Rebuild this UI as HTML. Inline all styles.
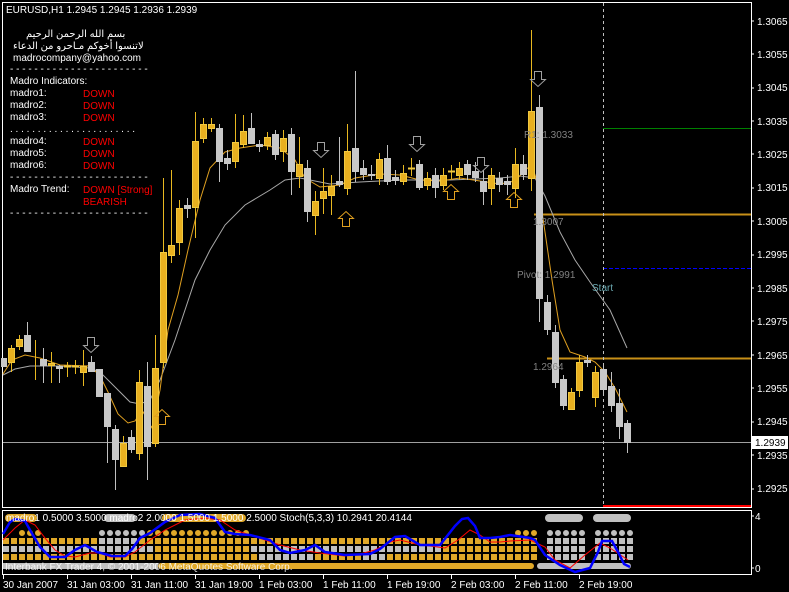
<!DOCTYPE html>
<html><head><meta charset="utf-8"><style>
html,body{margin:0;padding:0;background:#000;width:789px;height:592px;overflow:hidden}
svg{display:block}
text{font-family:"Liberation Sans","DejaVu Sans",sans-serif;font-size:10px}
</style></head><body>
<svg width="789" height="592" viewBox="0 0 789 592" xmlns="http://www.w3.org/2000/svg">
<rect width="789" height="592" fill="#000"/>
<rect x="2.5" y="2.5" width="749" height="505" fill="none" stroke="#fff"/>
<g fill="#fff">
<text x="757" y="25">1.3065</text><text x="757" y="58">1.3055</text><text x="757" y="91">1.3045</text><text x="757" y="125">1.3035</text><text x="757" y="158">1.3025</text><text x="757" y="191">1.3015</text><text x="757" y="225">1.3005</text><text x="757" y="258">1.2995</text><text x="757" y="292">1.2985</text><text x="757" y="325">1.2975</text><text x="757" y="359">1.2965</text><text x="757" y="392">1.2955</text><text x="757" y="425">1.2945</text><text x="757" y="459">1.2935</text><text x="757" y="492">1.2925</text>
</g>
<g stroke="#fff"><path d="M751 21h3M751 54h3M751 88h3M751 121h3M751 154h3M751 188h3M751 221h3M751 255h3M751 288h3M751 321h3M751 355h3M751 388h3M751 422h3M751 455h3M751 489h3"/></g>
<line x1="3" y1="442.5" x2="751" y2="442.5" stroke="#a0a0a0"/>
<line x1="603" y1="128.5" x2="751" y2="128.5" stroke="#008000"/>
<line x1="534" y1="214.5" x2="751" y2="214.5" stroke="#c89018" stroke-width="2"/>
<line x1="547" y1="358.5" x2="751" y2="358.5" stroke="#c89018" stroke-width="2"/>
<line x1="603" y1="268.5" x2="751" y2="268.5" stroke="#0000ff" stroke-dasharray="4,2"/>
<line x1="603.5" y1="3" x2="603.5" y2="507" stroke="#c0c0c0" stroke-dasharray="3,3"/>
<line x1="603" y1="506" x2="751" y2="506" stroke="#ff0000" stroke-width="2"/>
<rect x="752" y="436" width="36" height="13" fill="#fff"/><text x="755" y="446" fill="#000">1.2939</text>
<polyline fill="none" stroke="#a8a8a8" points="3,375 15,369 30,366 60,366 90,368 100,372 115,387 130,402 140,404 150,400 160,380 175,340 195,280 210,250 225,225 245,205 270,190 285,180 300,178 330,184 360,182 400,180 450,180 500,178 520,176 535,178 545,196 560,232 575,260 590,282 610,310 627,348"/>
<polyline fill="none" stroke="#e0a020" points="3,374 12,360 25,355 40,358 60,365 90,366 100,376 108,392 118,414 128,423 135,421 142,410 152,428 160,390 168,330 178,295 188,250 200,200 210,168 225,152 240,148 260,145 280,148 295,160 305,178 320,187 340,185 355,178 380,174 400,175 420,180 440,181 460,178 480,181 500,184 515,181 525,170 532,165 538,185 545,232 552,280 560,330 570,352 585,357 595,362 605,372 615,388 627,412"/>
<path stroke="#c0c0c0" fill="none" d="M27.5 322v30M43.5 348v35M59.5 365v18M91.5 356v16M99.5 369v28M107.5 393v70M115.5 425v65M131.5 430v23M147.5 362v118M187.5 198v20M219.5 124v58M227.5 150v20M251.5 113v31M259.5 140v12M275.5 130v30M291.5 128v67M307.5 160v62M339.5 137v50M355.5 71v111M363.5 160v20M371.5 165v15M387.5 145v40M395.5 170v15M419.5 160v30M435.5 168v30M467.5 160v20M475.5 162v20M483.5 170v35M499.5 172v20M507.5 175v20M523.5 155v25M539.5 95v227M547.5 295v40M555.5 325v63M563.5 375v35M587.5 355v12M603.5 365v30M611.5 372v40M619.5 389v50M627.5 420v33"/>
<path stroke="#e8b820" fill="none" d="M11.5 345v27M19.5 335v15M35.5 340v40M51.5 352v31M67.5 362v15M75.5 360v14M83.5 350v36M123.5 436v31M139.5 370v90M155.5 335v112M163.5 178v190M171.5 170v93M179.5 200v55M195.5 112v126M203.5 118v25M211.5 118v14M235.5 114v54M243.5 115v33M267.5 132v18M283.5 130v32M299.5 137v51M315.5 191v44M323.5 168v46M331.5 175v40M347.5 124v71M379.5 153v32M403.5 165v20M411.5 158v18M427.5 172v18M443.5 168v22M451.5 165v14M459.5 162v18M491.5 168v37M515.5 148v50M531.5 30v161M571.5 388v22M579.5 355v42M595.5 366v41"/>
<g fill="#c8c8c8">
<rect x="1" y="358" width="6" height="9"/><rect x="24" y="335" width="7" height="17"/><rect x="40" y="359" width="7" height="7"/><rect x="56" y="366" width="7" height="3"/><rect x="88" y="362" width="7" height="10"/><rect x="96" y="369" width="7" height="28"/><rect x="104" y="393" width="7" height="34"/><rect x="112" y="429" width="7" height="31"/><rect x="128" y="437" width="7" height="13"/><rect x="144" y="386" width="7" height="61"/><rect x="184" y="205" width="7" height="4"/><rect x="216" y="128" width="7" height="34"/><rect x="224" y="158" width="7" height="6"/><rect x="248" y="128" width="7" height="16"/><rect x="256" y="144" width="7" height="3"/><rect x="272" y="134" width="7" height="21"/><rect x="288" y="134" width="7" height="38"/><rect x="304" y="168" width="7" height="44"/><rect x="336" y="181" width="7" height="4"/><rect x="352" y="148" width="7" height="24"/><rect x="360" y="168" width="7" height="7"/><rect x="368" y="174" width="7" height="2"/><rect x="384" y="158" width="7" height="24"/><rect x="392" y="177" width="7" height="4"/><rect x="416" y="164" width="7" height="24"/><rect x="432" y="175" width="7" height="13"/><rect x="464" y="164" width="7" height="11"/><rect x="472" y="171" width="7" height="7"/><rect x="480" y="181" width="7" height="11"/><rect x="496" y="178" width="7" height="7"/><rect x="504" y="181" width="7" height="4"/><rect x="520" y="164" width="7" height="11"/><rect x="536" y="107" width="7" height="192"/><rect x="544" y="302" width="7" height="28"/><rect x="552" y="332" width="7" height="51"/><rect x="560" y="379" width="7" height="27"/><rect x="584" y="360" width="7" height="3"/><rect x="600" y="369" width="7" height="21"/><rect x="608" y="386" width="7" height="20"/><rect x="616" y="403" width="7" height="24"/><rect x="624" y="423" width="7" height="20"/>
</g>
<g fill="#e8b020" stroke="#f0c840">
<rect x="8.5" y="348.5" width="6" height="14"/><rect x="16.5" y="339.5" width="6" height="7"/><rect x="48.5" y="363.5" width="6" height="2"/><rect x="64.5" y="366" width="6" height="1"/><rect x="72.5" y="366" width="6" height="1"/><rect x="80.5" y="366.5" width="6" height="6"/><rect x="120.5" y="443.5" width="6" height="23"/><rect x="136.5" y="382.5" width="6" height="71"/><rect x="152.5" y="368.5" width="6" height="75"/><rect x="160.5" y="252.5" width="6" height="110"/><rect x="168.5" y="245.5" width="6" height="10"/><rect x="176.5" y="208.5" width="6" height="34"/><rect x="192.5" y="141.5" width="6" height="66"/><rect x="200.5" y="124.5" width="6" height="14"/><rect x="208.5" y="124.5" width="6" height="4"/><rect x="232.5" y="142.5" width="6" height="19"/><rect x="240.5" y="131.5" width="6" height="13"/><rect x="264.5" y="137.5" width="6" height="8"/><rect x="280.5" y="138.5" width="6" height="13"/><rect x="296.5" y="164.5" width="6" height="12"/><rect x="312.5" y="201.5" width="6" height="14"/><rect x="320.5" y="191.5" width="6" height="7"/><rect x="328.5" y="186.5" width="6" height="9"/><rect x="344.5" y="151.5" width="6" height="37"/><rect x="376.5" y="159.5" width="6" height="19"/><rect x="400.5" y="173.5" width="6" height="8"/><rect x="408.5" y="168" width="6" height="1"/><rect x="424.5" y="178.5" width="6" height="7"/><rect x="440.5" y="175.5" width="6" height="10"/><rect x="448.5" y="171" width="6" height="1"/><rect x="456.5" y="168.5" width="6" height="7"/><rect x="488.5" y="175.5" width="6" height="13"/><rect x="512.5" y="164.5" width="6" height="24"/><rect x="528.5" y="111.5" width="6" height="67"/><rect x="568.5" y="392.5" width="6" height="17"/><rect x="576.5" y="362.5" width="6" height="28"/><rect x="592.5" y="372.5" width="6" height="25"/>
</g>
<g fill="none" stroke="#a0a0a0">
<path d="M87.5 337.5h7v8h4l-7.5 7-7.5-7h4z"/><path d="M317.5 142.5h7v8h4l-7.5 7-7.5-7h4z"/><path d="M413.5 136.5h7v8h4l-7.5 7-7.5-7h4z"/><path d="M477.5 157.5h7v8h4l-7.5 7-7.5-7h4z"/><path d="M534.5 71.5h7v8h4l-7.5 7-7.5-7h4z"/>
</g>
<g fill="none" stroke="#e0a020">
<path d="M158.5 424.5h7v-8h4l-7.5-7-7.5 7h4z"/><path d="M342.5 226.5h7v-8h4l-7.5-7-7.5 7h4z"/><path d="M447.5 199.5h7v-8h4l-7.5-7-7.5 7h4z"/><path d="M510.5 207.5h7v-8h4l-7.5-7-7.5 7h4z"/>
</g>
<g fill="#808080"><text x="524" y="138">R1: 1.3033</text><text x="533" y="225">1.3007</text><text x="517" y="278">Pivot: 1.2991</text><text x="533" y="370">1.2964</text></g>
<text x="592" y="291" fill="#6aa8b0">Start</text>
<g fill="#fff">
<text x="6" y="13">EURUSD,H1  1.2945 1.2945 1.2936 1.2939</text>
<text x="26" y="37" font-family="'DejaVu Sans',sans-serif" font-size="10">بسم الله الرحمن الرحيم</text>
<text x="13" y="49" font-family="'DejaVu Sans',sans-serif" font-size="10">لاتنسوا أخوكم مـاحرو من الدعاء</text>
<text x="13" y="61">madrocompany@yahoo.com</text>
<text x="10" y="72">- - - - - - - - - - - - - - - - - - - - - - -</text>
<text x="10" y="84">Madro Indicators:</text>
<text x="10" y="96">madro1:</text><text x="10" y="108">madro2:</text><text x="10" y="120">madro3:</text>
<text x="10" y="132">. . . . . . . . . . . . . . . . . . . . . . .</text>
<text x="10" y="144">madro4:</text><text x="10" y="156">madro5:</text><text x="10" y="168">madro6:</text>
<text x="10" y="180">- - - - - - - - - - - - - - - - - - - - - - -</text>
<text x="10" y="192">Madro Trend:</text>
<text x="10" y="216">- - - - - - - - - - - - - - - - - - - - - - -</text>
</g>
<g fill="#ff0000">
<text x="83" y="97">DOWN</text><text x="83" y="109">DOWN</text><text x="83" y="121">DOWN</text>
<text x="83" y="145">DOWN</text><text x="83" y="157">DOWN</text><text x="83" y="169">DOWN</text>
<text x="83" y="193">DOWN [Strong]</text><text x="83" y="205">BEARISH</text>
</g>
<rect x="2.5" y="510.5" width="749" height="64" fill="none" stroke="#fff"/>
<text x="755" y="520" fill="#fff">4</text><text x="755" y="572" fill="#fff">0</text>
<path stroke="#fff" d="M751 516h3M751 568h3"/>
<rect x="5" y="514" width="32" height="8" rx="4" fill="#e0a828"/>
<rect x="104" y="514" width="32" height="8" rx="4" fill="#c0c0c0"/>
<rect x="162" y="514" width="84" height="8" rx="4" fill="#e0a828"/>
<rect x="545" y="514" width="38" height="8" rx="4" fill="#c0c0c0"/>
<rect x="593" y="514" width="38" height="8" rx="4" fill="#c0c0c0"/>
<!-- circles -->
<g stroke-width="6" stroke-linecap="round" stroke-dasharray="0 8">
<line x1="22" y1="533" x2="40" y2="533" stroke="#e0a828"/>
<line x1="102" y1="533" x2="136" y2="533" stroke="#c0c0c0"/>
<line x1="142" y1="533" x2="144" y2="533" stroke="#c0c0c0"/>
<line x1="150" y1="533" x2="248" y2="533" stroke="#e0a828"/>
<line x1="518" y1="533" x2="536" y2="533" stroke="#e0a828"/>
<line x1="550" y1="533" x2="584" y2="533" stroke="#c0c0c0"/>
<line x1="598" y1="533" x2="632" y2="533" stroke="#c0c0c0"/>
</g>
<!-- squares -->
<g stroke-width="6" stroke-dasharray="6 2">
<line x1="3" y1="541" x2="99" y2="541" stroke="#e0a828"/>
<line x1="99" y1="541" x2="139" y2="541" stroke="#c0c0c0"/>
<line x1="139" y1="541" x2="537" y2="541" stroke="#e0a828"/>
<line x1="547" y1="541" x2="585" y2="541" stroke="#c0c0c0"/>
<line x1="595" y1="541" x2="633" y2="541" stroke="#c0c0c0"/>
<line x1="3" y1="549" x2="155" y2="549" stroke="#c0c0c0"/>
<line x1="155" y1="549" x2="251" y2="549" stroke="#e0a828"/>
<line x1="251" y1="549" x2="443" y2="549" stroke="#c0c0c0"/>
<line x1="443" y1="549" x2="537" y2="549" stroke="#e0a828"/>
<line x1="547" y1="549" x2="585" y2="549" stroke="#c0c0c0"/>
<line x1="595" y1="549" x2="633" y2="549" stroke="#c0c0c0"/>
<line x1="3" y1="557" x2="259" y2="557" stroke="#e0a828"/>
<line x1="259" y1="557" x2="315" y2="557" stroke="#c0c0c0"/>
<line x1="315" y1="557" x2="363" y2="557" stroke="#e0a828"/>
<line x1="363" y1="557" x2="387" y2="557" stroke="#c0c0c0"/>
<line x1="387" y1="557" x2="537" y2="557" stroke="#e0a828"/>
<line x1="547" y1="557" x2="585" y2="557" stroke="#c0c0c0"/>
<line x1="595" y1="557" x2="633" y2="557" stroke="#c0c0c0"/>
</g>
<rect x="3" y="563" width="155" height="6" fill="#c0c0c0"/>
<rect x="158" y="563" width="376" height="6" rx="3" fill="#e0a828"/>
<rect x="537" y="563" width="94" height="6" rx="3" fill="#c0c0c0"/>
<polyline fill="none" stroke="#ff0000" points="3,540 15,528 25,520 35,525 45,538 55,550 65,556 75,557 90,553 100,553 110,557 125,557 135,552 150,540 165,530 185,520 205,518 220,520 235,530 250,535 265,540 280,545 300,550 320,553 345,556 360,554 375,550 390,542 400,540 420,545 430,546 445,548 458,540 470,530 480,535 490,542 500,542 510,541 530,540 545,547 555,560 570,568 585,555 600,543 610,548 628,560"/>
<polyline fill="none" stroke="#0000ff" stroke-width="2.5" points="3,534 10,522 15,519 25,521 30,530 40,547 50,557 65,557 75,550 85,545 97,552 112,556 125,556 132,549 140,538 150,533 165,522 180,515 200,514 215,518 225,532 235,534 250,535 270,540 280,550 290,553 305,550 315,545 325,552 345,555 370,554 380,549 395,537 405,536 420,545 440,545 455,526 462,519 468,518 475,526 480,538 490,538 500,537 510,535 530,538 535,540 545,555 560,565 575,572 590,568 598,552 602,541 612,541 618,552 624,564 630,567"/>
<text x="6" y="521" fill="#fff">madro1 0.5000 3.5000  madro2 2.0000 1.5000 1.5000 2.5000  Stoch(5,3,3) 10.2941 20.4144</text>
<text x="5" y="570" fill="#ffffff" opacity="0.85">Interbank FX Trader 4, © 2001-2006 MetaQuotes Software Corp.</text>
<path stroke="#fff" d="M3.5 575v4M67.5 575v4M131.5 575v4M195.5 575v4M259.5 575v4M323.5 575v4M387.5 575v4M451.5 575v4M515.5 575v4M579.5 575v4"/>
<g fill="#fff">
<text x="3" y="588">30 Jan 2007</text><text x="67" y="588">31 Jan 03:00</text><text x="131" y="588">31 Jan 11:00</text><text x="195" y="588">31 Jan 19:00</text><text x="259" y="588">1 Feb 03:00</text><text x="323" y="588">1 Feb 11:00</text><text x="387" y="588">1 Feb 19:00</text><text x="451" y="588">2 Feb 03:00</text><text x="515" y="588">2 Feb 11:00</text><text x="579" y="588">2 Feb 19:00</text>
</g>
</svg>
</body></html>
